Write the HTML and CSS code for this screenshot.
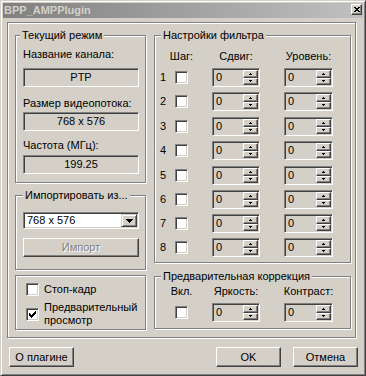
FILE: index.html
```html
<!DOCTYPE html>
<html lang="ru">
<head>
<meta charset="utf-8">
<title>BPP_AMPPlugin</title>
<link rel="stylesheet" href="styles.css">
</head>
<body>
<div class="window">
  <div class="titlebar">
    <span class="title">BPP_AMPPlugin</span>
    <span class="close"><svg width="6" height="5" viewBox="0 0 6 5"><path d="M0 0h2v1h2V0h2v1H5v1H4v1h1v1h1v1H4V4H2v1H0V4h1V3h1V2H1V1H0z"/></svg></span>
  </div>
  <div class="client">
    <div class="frame">
      <div class="col col-left">
        <div class="group g-mode">
          <div class="gtitle t-mode">Текущий режим</div>
          <div class="lbl l1">Название канала:</div>
          <div class="field f1">PTP</div>
          <div class="lbl l2">Размер видеопотока:</div>
          <div class="field f2">768 x 576</div>
          <div class="lbl l3">Частота (МГц):</div>
          <div class="field f3">199.25</div>
        </div>
        <div class="group g-import">
          <div class="gtitle t-import">Импортировать из...</div>
          <div class="combo">
            <span class="combo-text">768 x 576</span>
            <span class="combo-btn"><svg width="7" height="4" viewBox="0 0 7 4"><path d="M0 0h7v1H6v1H5v1H4v1H3V3H2V2H1V1H0z"/></svg></span>
          </div>
          <div class="btn btn-import disabled">Импорт</div>
        </div>
        <div class="group g-opts">
          <div class="chk-row">
            <span class="chk"></span>
            <span class="chk-label">Стоп-кадр</span>
          </div>
          <div class="chk-row r2">
            <span class="chk"><svg width="7" height="7" viewBox="0 0 7 7"><path d="M6 0h1v3H6v1H5v1H4v1H3v1H2V6H1V5H0V2h1v1h1v1h1V3h1V2h1V1h1z"/></svg></span>
            <span class="chk-label">Предварительный<br>просмотр</span>
          </div>
        </div>
      </div>
      <div class="col col-right">
        <div class="group g-filter">
          <div class="gtitle t-right">Настройки фильтра</div>
          <div class="frow head">
            <span class="num"></span>
            <span class="c-chk">Шаг:</span>
            <span class="c-spin">Сдвиг:</span>
            <span class="c-spin c2">Уровень:</span>
          </div>
          <div class="frow"><span class="num">1</span><span class="c-chk"><span class="chk"></span></span><span class="c-spin"><span class="spin"><span class="spin-val">0</span><span class="spin-btns"><span class="sb"><svg width="3" height="2" viewBox="0 0 3 2"><path d="M1 0h1v1h1v1H0V1h1z"/></svg></span><span class="sb"><svg width="3" height="2" viewBox="0 0 3 2"><path d="M0 0h3v1H2v1H1V1H0z"/></svg></span></span></span></span><span class="c-spin c2"><span class="spin"><span class="spin-val">0</span><span class="spin-btns"><span class="sb"><svg width="3" height="2" viewBox="0 0 3 2"><path d="M1 0h1v1h1v1H0V1h1z"/></svg></span><span class="sb"><svg width="3" height="2" viewBox="0 0 3 2"><path d="M0 0h3v1H2v1H1V1H0z"/></svg></span></span></span></span></div>
          <div class="frow"><span class="num">2</span><span class="c-chk"><span class="chk"></span></span><span class="c-spin"><span class="spin"><span class="spin-val">0</span><span class="spin-btns"><span class="sb"><svg width="3" height="2" viewBox="0 0 3 2"><path d="M1 0h1v1h1v1H0V1h1z"/></svg></span><span class="sb"><svg width="3" height="2" viewBox="0 0 3 2"><path d="M0 0h3v1H2v1H1V1H0z"/></svg></span></span></span></span><span class="c-spin c2"><span class="spin"><span class="spin-val">0</span><span class="spin-btns"><span class="sb"><svg width="3" height="2" viewBox="0 0 3 2"><path d="M1 0h1v1h1v1H0V1h1z"/></svg></span><span class="sb"><svg width="3" height="2" viewBox="0 0 3 2"><path d="M0 0h3v1H2v1H1V1H0z"/></svg></span></span></span></span></div>
          <div class="frow wide"><span class="num">3</span><span class="c-chk"><span class="chk"></span></span><span class="c-spin"><span class="spin"><span class="spin-val">0</span><span class="spin-btns"><span class="sb"><svg width="3" height="2" viewBox="0 0 3 2"><path d="M1 0h1v1h1v1H0V1h1z"/></svg></span><span class="sb"><svg width="3" height="2" viewBox="0 0 3 2"><path d="M0 0h3v1H2v1H1V1H0z"/></svg></span></span></span></span><span class="c-spin c2"><span class="spin"><span class="spin-val">0</span><span class="spin-btns"><span class="sb"><svg width="3" height="2" viewBox="0 0 3 2"><path d="M1 0h1v1h1v1H0V1h1z"/></svg></span><span class="sb"><svg width="3" height="2" viewBox="0 0 3 2"><path d="M0 0h3v1H2v1H1V1H0z"/></svg></span></span></span></span></div>
          <div class="frow"><span class="num">4</span><span class="c-chk"><span class="chk"></span></span><span class="c-spin"><span class="spin"><span class="spin-val">0</span><span class="spin-btns"><span class="sb"><svg width="3" height="2" viewBox="0 0 3 2"><path d="M1 0h1v1h1v1H0V1h1z"/></svg></span><span class="sb"><svg width="3" height="2" viewBox="0 0 3 2"><path d="M0 0h3v1H2v1H1V1H0z"/></svg></span></span></span></span><span class="c-spin c2"><span class="spin"><span class="spin-val">0</span><span class="spin-btns"><span class="sb"><svg width="3" height="2" viewBox="0 0 3 2"><path d="M1 0h1v1h1v1H0V1h1z"/></svg></span><span class="sb"><svg width="3" height="2" viewBox="0 0 3 2"><path d="M0 0h3v1H2v1H1V1H0z"/></svg></span></span></span></span></div>
          <div class="frow wide"><span class="num">5</span><span class="c-chk"><span class="chk"></span></span><span class="c-spin"><span class="spin"><span class="spin-val">0</span><span class="spin-btns"><span class="sb"><svg width="3" height="2" viewBox="0 0 3 2"><path d="M1 0h1v1h1v1H0V1h1z"/></svg></span><span class="sb"><svg width="3" height="2" viewBox="0 0 3 2"><path d="M0 0h3v1H2v1H1V1H0z"/></svg></span></span></span></span><span class="c-spin c2"><span class="spin"><span class="spin-val">0</span><span class="spin-btns"><span class="sb"><svg width="3" height="2" viewBox="0 0 3 2"><path d="M1 0h1v1h1v1H0V1h1z"/></svg></span><span class="sb"><svg width="3" height="2" viewBox="0 0 3 2"><path d="M0 0h3v1H2v1H1V1H0z"/></svg></span></span></span></span></div>
          <div class="frow"><span class="num">6</span><span class="c-chk"><span class="chk"></span></span><span class="c-spin"><span class="spin"><span class="spin-val">0</span><span class="spin-btns"><span class="sb"><svg width="3" height="2" viewBox="0 0 3 2"><path d="M1 0h1v1h1v1H0V1h1z"/></svg></span><span class="sb"><svg width="3" height="2" viewBox="0 0 3 2"><path d="M0 0h3v1H2v1H1V1H0z"/></svg></span></span></span></span><span class="c-spin c2"><span class="spin"><span class="spin-val">0</span><span class="spin-btns"><span class="sb"><svg width="3" height="2" viewBox="0 0 3 2"><path d="M1 0h1v1h1v1H0V1h1z"/></svg></span><span class="sb"><svg width="3" height="2" viewBox="0 0 3 2"><path d="M0 0h3v1H2v1H1V1H0z"/></svg></span></span></span></span></div>
          <div class="frow"><span class="num">7</span><span class="c-chk"><span class="chk"></span></span><span class="c-spin"><span class="spin"><span class="spin-val">0</span><span class="spin-btns"><span class="sb"><svg width="3" height="2" viewBox="0 0 3 2"><path d="M1 0h1v1h1v1H0V1h1z"/></svg></span><span class="sb"><svg width="3" height="2" viewBox="0 0 3 2"><path d="M0 0h3v1H2v1H1V1H0z"/></svg></span></span></span></span><span class="c-spin c2"><span class="spin"><span class="spin-val">0</span><span class="spin-btns"><span class="sb"><svg width="3" height="2" viewBox="0 0 3 2"><path d="M1 0h1v1h1v1H0V1h1z"/></svg></span><span class="sb"><svg width="3" height="2" viewBox="0 0 3 2"><path d="M0 0h3v1H2v1H1V1H0z"/></svg></span></span></span></span></div>
          <div class="frow"><span class="num">8</span><span class="c-chk"><span class="chk"></span></span><span class="c-spin"><span class="spin"><span class="spin-val">0</span><span class="spin-btns"><span class="sb"><svg width="3" height="2" viewBox="0 0 3 2"><path d="M1 0h1v1h1v1H0V1h1z"/></svg></span><span class="sb"><svg width="3" height="2" viewBox="0 0 3 2"><path d="M0 0h3v1H2v1H1V1H0z"/></svg></span></span></span></span><span class="c-spin c2"><span class="spin"><span class="spin-val">0</span><span class="spin-btns"><span class="sb"><svg width="3" height="2" viewBox="0 0 3 2"><path d="M1 0h1v1h1v1H0V1h1z"/></svg></span><span class="sb"><svg width="3" height="2" viewBox="0 0 3 2"><path d="M0 0h3v1H2v1H1V1H0z"/></svg></span></span></span></span></div>
        </div>
        <div class="group g-pre">
          <div class="gtitle t-right">Предварительная коррекция</div>
          <div class="frow head">
            <span class="num"></span>
            <span class="c-chk">Вкл.</span>
            <span class="c-spin">Яркость:</span>
            <span class="c-spin c2">Контраст:</span>
          </div>
          <div class="frow"><span class="num"></span><span class="c-chk"><span class="chk"></span></span><span class="c-spin"><span class="spin"><span class="spin-val">0</span><span class="spin-btns"><span class="sb"><svg width="3" height="2" viewBox="0 0 3 2"><path d="M1 0h1v1h1v1H0V1h1z"/></svg></span><span class="sb"><svg width="3" height="2" viewBox="0 0 3 2"><path d="M0 0h3v1H2v1H1V1H0z"/></svg></span></span></span></span><span class="c-spin c2"><span class="spin"><span class="spin-val">0</span><span class="spin-btns"><span class="sb"><svg width="3" height="2" viewBox="0 0 3 2"><path d="M1 0h1v1h1v1H0V1h1z"/></svg></span><span class="sb"><svg width="3" height="2" viewBox="0 0 3 2"><path d="M0 0h3v1H2v1H1V1H0z"/></svg></span></span></span></span></div>
        </div>
      </div>
    </div>
    <div class="buttons">
      <div class="btn">О плагине</div>
      <div class="spacer"></div>
      <div class="btn">OK</div>
      <div class="btn">Отмена</div>
    </div>
  </div>
</div>
</body>
</html>
```

FILE: styles.css
```css
* { box-sizing: border-box; margin: 0; padding: 0; }
html, body { width: 366px; height: 376px; overflow: hidden; background: #d4d0c8; }
body {
  font-family: "Liberation Sans", Arial, sans-serif;
  font-size: 11px;
  line-height: 13px;
  color: #000;
}
svg { display: block; fill: #000; }

.window {
  width: 366px;
  height: 376px;
  border: 1px solid;
  border-color: #d4d0c8 #404040 #404040 #d4d0c8;
  box-shadow: inset 1px 1px 0 #fff, inset -1px -1px 0 #808080;
  padding: 2px;
  background: #d4d0c8;
  display: flex;
  flex-direction: column;
}

.titlebar {
  height: 15px;
  flex: none;
  display: flex;
  align-items: center;
  padding-left: 1px;
  background: linear-gradient(to right, #808080, #c0c0c0);
}
.title {
  font-weight: bold;
  color: #d4d0c8;
  white-space: nowrap;
}
.close {
  margin-left: auto;
  margin-right: 1px;
  align-self: flex-start;
  margin-top: 1px;
  width: 11px;
  height: 11px;
  display: flex;
  align-items: center;
  justify-content: center;
  background: #d4d0c8;
  border: 1px solid;
  border-color: #fff #404040 #404040 #fff;
  box-shadow: inset -1px -1px 0 #808080;
}

.client {
  flex: 1;
  padding: 4px 0 0 4px;
}

.frame {
  width: 349px;
  height: 316px;
  border: 1px solid #808080;
  box-shadow: inset 1px 1px 0 #fff, 1px 1px 0 #fff;
  padding: 12px 4px 0 7px;
  display: flex;
  gap: 8px;
  align-items: flex-start;
}

.col { display: flex; flex-direction: column; }
.col-left { width: 131px; }
.col-right { width: 197px; }

.group {
  border: 1px solid #808080;
  box-shadow: inset 1px 1px 0 #fff, 1px 1px 0 #fff;
}
.gtitle {
  width: fit-content;
  margin-top: -7px;
  padding: 0 2px;
  background: #d4d0c8;
  white-space: nowrap;
}
.t-mode { margin-left: -3px; }
.t-import { margin-left: 0; }
.t-right { margin-left: 1px; }

/* current mode */
.g-mode { padding: 0 6px 8px 7px; }
.lbl { white-space: nowrap; }
.l1 { margin-top: 6px; }
.l2 { margin-top: 10px; }
.l3 { margin-top: 8px; }
.f1 { margin-top: 7px; }
.f2 { margin-top: 2px; }
.f3 { margin-top: 3px; }
.field {
  height: 19px;
  width: 116px;
  border: 1px solid;
  border-color: #808080 #fff #fff #808080;
  box-shadow: inset 1px 1px 0 #404040, inset -1px -1px 0 #d4d0c8;
  text-align: center;
  line-height: 17px;
}

/* import */
.g-import { margin-top: 12px; padding: 0 6px 12px 7px; }
.combo {
  margin-top: 10px;
  width: 116px;
  height: 17px;
  background: #fff;
  border: 1px solid;
  border-color: #808080 #fff #fff #808080;
  box-shadow: inset 1px 1px 0 #404040, inset -1px -1px 0 #d4d0c8;
  padding: 1px;
  display: flex;
}
.combo-text { flex: 1; padding-left: 2px; line-height: 13px; }
.combo-btn {
  width: 16px;
  height: 13px;
  background: #d4d0c8;
  border: 1px solid;
  border-color: #d4d0c8 #404040 #404040 #d4d0c8;
  box-shadow: inset 1px 1px 0 #fff, inset -1px -1px 0 #808080;
  display: flex;
  align-items: center;
  justify-content: center;
}
.btn {
  height: 20px;
  width: 65px;
  display: flex;
  align-items: center;
  justify-content: center;
  background: #d4d0c8;
  border: 1px solid;
  border-color: #fff #404040 #404040 #fff;
  box-shadow: inset -1px -1px 0 #808080;
  white-space: nowrap;
}
.btn-import { margin-top: 9px; width: 116px; height: 19px; }
.disabled { color: #808080; text-shadow: 1px 1px 0 #fff; }

/* options */
.g-opts { margin-top: 5px; padding: 7px 4px 2px 10px; }
.chk-row { display: flex; align-items: center; }
.chk-row.r2 { margin-top: 5px; }
.chk-label { margin-left: 5px; white-space: nowrap; }
.chk {
  width: 13px;
  height: 13px;
  flex: none;
  background: #fff;
  border: 1px solid;
  border-color: #808080 #fff #fff #808080;
  box-shadow: inset 1px 1px 0 #404040, inset -1px -1px 0 #d4d0c8;
  display: flex;
  align-items: center;
  justify-content: center;
}

/* filter */
.g-filter { padding: 0 4px 5px 5px; }
.frow { display: flex; align-items: center; height: 19px; margin-top: 5px; }
.frow.wide { margin-top: 6px; }
.frow.head { height: 13px; margin-top: 8px; }
.num { width: 15px; flex: none; }
.c-chk { width: 13px; flex: none; display: flex; justify-content: center; white-space: nowrap; }
.c-spin { width: 48px; margin-left: 24px; flex: none; display: flex; justify-content: center; white-space: nowrap; }
.c-spin.c2 { width: 49px; }

.spin {
  width: 100%;
  height: 19px;
  display: flex;
  border: 1px solid;
  border-color: #808080 #fff #fff #808080;
  box-shadow: inset 1px 1px 0 #404040, inset -1px -1px 0 #d4d0c8;
  padding: 1px;
}
.spin-val { flex: 1; padding-left: 2px; line-height: 15px; }
.spin-btns { width: 15px; display: flex; flex-direction: column; }
.sb {
  flex: 1;
  display: flex;
  align-items: center;
  justify-content: center;
  background: #d4d0c8;
  border: 1px solid;
  border-color: #fff #404040 #404040 #fff;
  box-shadow: inset -1px -1px 0 #808080;
}

/* pre-correction */
.g-pre { margin-top: 13px; padding: 0 4px 6px 5px; }
.g-pre .frow.head { margin-top: 2px; }

/* bottom buttons */
.buttons {
  display: flex;
  gap: 12px;
  margin-top: 9px;
  padding: 0 5px 0 2px;
}
.spacer { flex: 1; }
```
